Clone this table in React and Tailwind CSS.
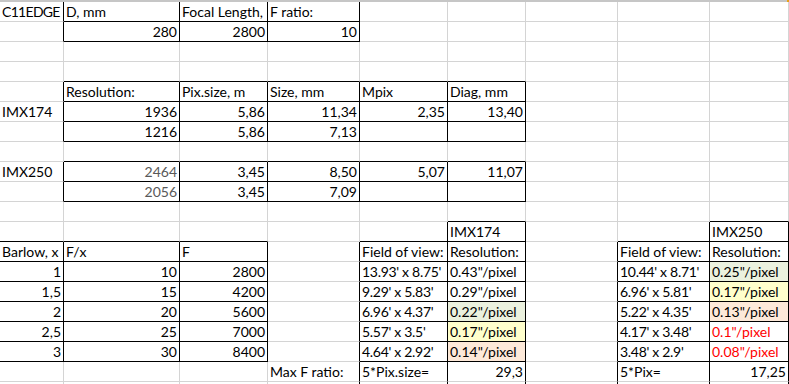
import React from "react";

const NCOLS = 9;
const NROWS = 20;

const L = (t, extra = {}) => ({ t, a: "l", ...extra });
const R = (t, extra = {}) => ({ t, a: "r", ...extra });

const GREEN = "bg-[#ebf1de]";
const YELLOW = "bg-[#ffffcc]";
const PEACH = "bg-[#fde9d9]";
const GRAYTXT = "text-[#595959]";
const RED = "text-[#ff0000]";
const TIGHT = "tracking-[-0.3px]";

const data = {
  1: { 0: L("C11EDGE", { x: "tracking-[-0.7px]" }), 1: L("D, mm"), 2: L("Focal Length,"), 3: L("F ratio:") },
  2: { 1: R("280"), 2: R("2800"), 3: R("10") },
  5: { 1: L("Resolution:"), 2: L("Pix.size, m"), 3: L("Size, mm"), 4: L("Mpix"), 5: L("Diag, mm") },
  6: { 0: L("IMX174"), 1: R("1936"), 2: R("5,86"), 3: R("11,34"), 4: R("2,35"), 5: R("13,40") },
  7: { 1: R("1216"), 2: R("5,86"), 3: R("7,13") },
  9: {
    0: L("IMX250"),
    1: R("2464", { c: GRAYTXT }),
    2: R("3,45"),
    3: R("8,50"),
    4: R("5,07"),
    5: R("11,07"),
  },
  10: { 1: R("2056", { c: GRAYTXT }), 2: R("3,45"), 3: R("7,09") },
  12: { 5: L("IMX174"), 8: L("IMX250") },
  13: {
    0: L("Barlow, x"),
    1: L("F/x"),
    2: L("F"),
    4: L("Field of view:"),
    5: L("Resolution:"),
    7: L("Field of view:"),
    8: L("Resolution:"),
  },
  14: {
    0: R("1"), 1: R("10"), 2: R("2800"),
    4: L("13.93' x 8.75'", { x: TIGHT }), 5: L("0.43\"/pixel"),
    7: L("10.44' x 8.71'", { x: TIGHT }), 8: L("0.25\"/pixel", { bg: GREEN }),
  },
  15: {
    0: R("1,5"), 1: R("15"), 2: R("4200"),
    4: L("9.29' x 5.83'", { x: TIGHT }), 5: L("0.29\"/pixel"),
    7: L("6.96' x 5.81'", { x: TIGHT }), 8: L("0.17\"/pixel", { bg: YELLOW }),
  },
  16: {
    0: R("2"), 1: R("20"), 2: R("5600"),
    4: L("6.96' x 4.37'", { x: TIGHT }), 5: L("0.22\"/pixel", { bg: GREEN }),
    7: L("5.22' x 4.35'", { x: TIGHT }), 8: L("0.13\"/pixel", { bg: PEACH }),
  },
  17: {
    0: R("2,5"), 1: R("25"), 2: R("7000"),
    4: L("5.57' x 3.5'", { x: TIGHT }), 5: L("0.17\"/pixel", { bg: YELLOW }),
    7: L("4.17' x 3.48'", { x: TIGHT }), 8: L("0.1\"/pixel", { c: RED }),
  },
  18: {
    0: R("3"), 1: R("30"), 2: R("8400"),
    4: L("4.64' x 2.92'", { x: TIGHT }), 5: L("0.14\"/pixel", { bg: PEACH }),
    7: L("3.48' x 2.9'", { x: TIGHT }), 8: L("0.08\"/pixel", { c: RED }),
  },
  19: {
    3: L("Max F ratio:"),
    4: L("5*Pix.size="),
    5: R("29,3"),
    7: L("5*Pix="),
    8: R("17,25"),
  },
};

const boxRanges = [
  [1, 2, 1, 3],
  [5, 7, 1, 5],
  [9, 10, 1, 5],
  [13, 18, 0, 2],
  [12, 12, 5, 5],
  [12, 12, 8, 8],
  [13, 18, 4, 5],
  [13, 18, 7, 8],
];
const vboxRanges = [
  [19, 20, 4, 5],
  [19, 20, 7, 8],
];

const inRanges = (ranges, r, c) =>
  ranges.some(([r1, r2, c1, c2]) => r >= r1 && r <= r2 && c >= c1 && c <= c2);
const box = (r, c) => inRanges(boxRanges, r, c);
const vbox = (r, c) => inRanges(vboxRanges, r, c);

function Cell({ r, c }) {
  const cell = data[r]?.[c];
  const rightBlack = box(r, c) || box(r, c + 1) || vbox(r, c) || vbox(r, c + 1);
  const bottomBlack = box(r, c) || box(r + 1, c);
  const cls = [
    "h-[20px] border-r border-b overflow-hidden whitespace-nowrap px-[2px] leading-[19px]",
    rightBlack ? "border-r-black" : "border-r-[#d4d4d4]",
    bottomBlack ? "border-b-black" : "border-b-[#d4d4d4]",
    cell?.a === "r" ? "text-right" : "text-left",
    cell?.c ?? "text-black",
    cell?.bg ?? "bg-white",
    cell?.x ?? "",
  ].join(" ");
  return <div className={cls}>{cell?.t ?? ""}</div>;
}

export default function App() {
  const rows = [];
  for (let r = 1; r <= NROWS; r++) {
    for (let c = 0; c < NCOLS; c++) {
      rows.push(<Cell key={`${r}-${c}`} r={r} c={c} />);
    }
  }
  return (
    <div
      className="w-[789px] h-[384px] overflow-hidden bg-white text-[14px]"
      style={{ fontFamily: "Lato, 'Liberation Sans', sans-serif" }}
    >
      <div className="flex h-[2px]">
        <div className="flex-1 bg-[#c6c6c6]" />
        <div className="w-[2px] bg-[#e8a317]" />
      </div>
      <div className="grid grid-cols-[64px_116px_88px_92px_88px_78px_92px_92px_79px]">
        {rows}
      </div>
    </div>
  );
}
